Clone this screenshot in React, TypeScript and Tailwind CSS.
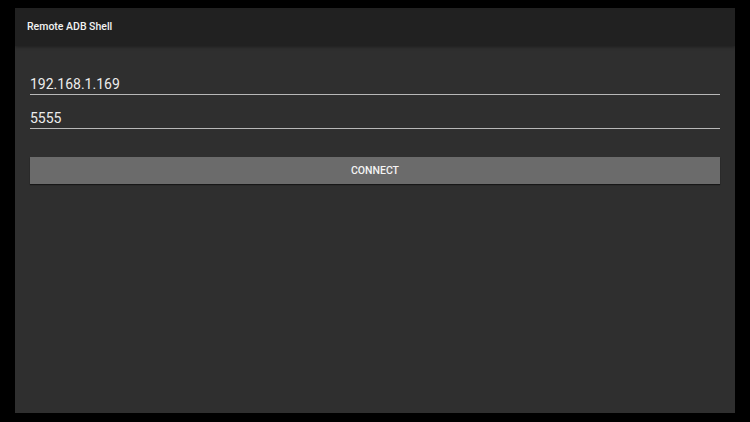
export default function App() {
  return (
    <div className="w-[750px] h-[422px] bg-black pl-[15px] pt-[8px] font-['Roboto',sans-serif]">
      <div className="w-[720px] h-[405px] bg-[#2f2f2f] flex flex-col">
        {/* app bar */}
        <div className="h-[38px] shrink-0 bg-[#212121] flex items-center pl-[12px] shadow-[0_1px_3px_rgba(0,0,0,0.35)]">
          <span className="text-[10.5px] font-medium text-[#f2f2f2]">Remote ADB Shell</span>
        </div>

        <div className="flex flex-col px-[15px] pt-[28px]">
          <div className="h-[21px] border-b border-[#b8b8b8] text-[14px] leading-[20px] text-[#ececec]">
            192.168.1.169
          </div>
          <div className="mt-[13px] h-[21px] border-b border-[#b8b8b8] text-[14px] leading-[20px] text-[#ececec]">
            5555
          </div>

          <button className="mt-[28px] h-[27px] w-full bg-[#6b6b6b] flex items-center justify-center pt-[1px] text-[10.5px] font-medium text-[#f4f4f4] shadow-[0_1px_1px_rgba(0,0,0,0.5)]">
            CONNECT
          </button>
        </div>
      </div>
    </div>
  );
}
